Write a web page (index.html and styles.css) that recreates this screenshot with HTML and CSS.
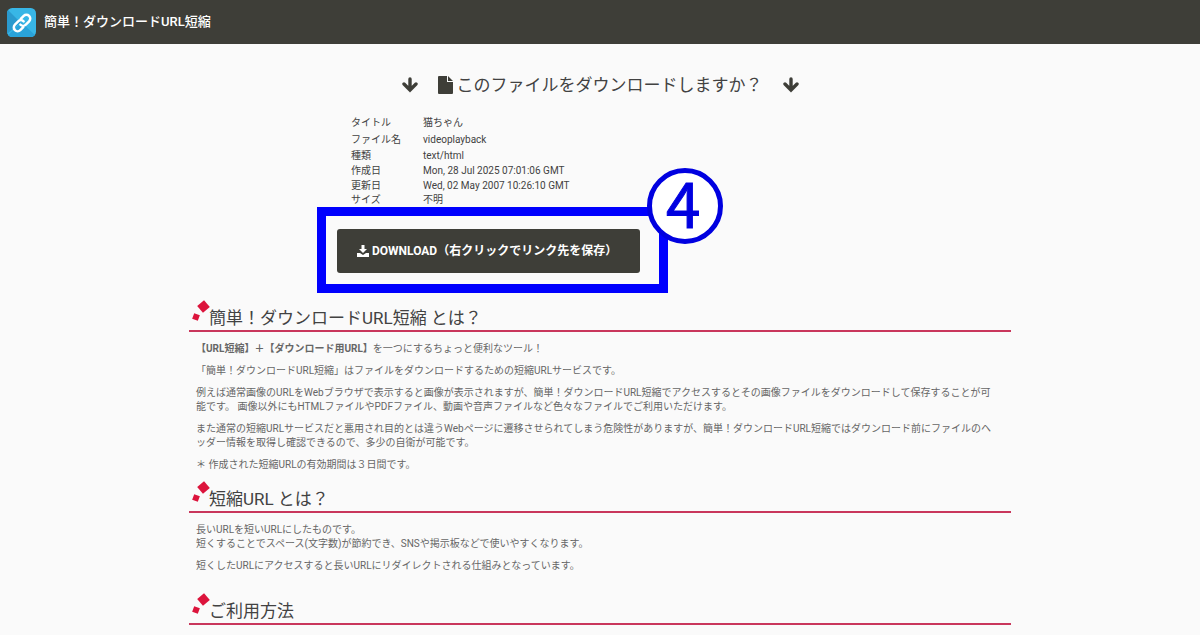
FILE: index.html
```html
<!DOCTYPE html>
<html lang="ja">
<head>
  <meta charset="UTF-8">
  <meta name="viewport" content="width=device-width, initial-scale=1">
  <title>簡単！ダウンロードURL短縮</title>
  <link rel="stylesheet" href="styles.css">
</head>
<body>

  <header class="site-header">
    <svg class="logo" viewBox="0 0 28 28" aria-hidden="true">
      <rect width="28" height="28" rx="5" fill="#38b6e6"/>
      <path d="M0 5a5 5 0 0 1 1-3l12 12L0 25z" fill="#2a9ace"/>
      <path d="M1 26l13-12 13 12a5 5 0 0 1-4 2H5a5 5 0 0 1-4-2z" fill="#2aa3da"/>
      <g transform="rotate(-45 14.500 14.500)" fill="none" stroke="#fff" stroke-width="2.400" stroke-linecap="round">
        <path d="M12.500 18.200H8.500a3.700 3.700 0 0 1 0-7.400h4.500a3.700 3.700 0 0 1 3.700 3.700"/>
        <path d="M16.500 10.800h4a3.700 3.700 0 0 1 0 7.400H16a3.700 3.700 0 0 1-3.700-3.700"/>
      </g>
    </svg>
    <a href="#">簡単！ダウンロードURL短縮</a>
  </header>

  <main class="container">
    <h1>
      <svg class="arrow" viewBox="0 0 16 16" aria-hidden="true"><path d="M8 2v11M2 7l6 6 6-6" fill="none" stroke="#3e3e38" stroke-width="3.400" stroke-linecap="round"/></svg>
      <span class="question">
        <svg class="file" viewBox="0 0 15 18" aria-hidden="true"><path d="M1 0h8v6h6v11a1 1 0 0 1-1 1H1a1 1 0 0 1-1-1V1a1 1 0 0 1 1-1zM10 0l5 5h-5z" fill="#3e3e38"/></svg>
        このファイルをダウンロードしますか？
      </span>
      <svg class="arrow" viewBox="0 0 16 16" aria-hidden="true"><path d="M8 2v11M2 7l6 6 6-6" fill="none" stroke="#3e3e38" stroke-width="3.400" stroke-linecap="round"/></svg>
    </h1>

    <div class="download">
      <table>
        <tr><th scope="row">タイトル</th><td>猫ちゃん</td></tr>
        <tr><th scope="row">ファイル名</th><td>videoplayback</td></tr>
        <tr><th scope="row">種類</th><td>text/html</td></tr>
        <tr><th scope="row">作成日</th><td>Mon, 28 Jul 2025 07:01:06 GMT</td></tr>
        <tr><th scope="row">更新日</th><td>Wed, 02 May 2007 10:26:10 GMT</td></tr>
        <tr><th scope="row">サイズ</th><td>不明</td></tr>
      </table>

      <div class="highlight">
        <a class="btn" href="#">
          <svg viewBox="0 0 12 12" aria-hidden="true"><path d="M4.500 0h3v4H10L6 8 2 4h2.500zM0 8h3l3 2 3-2h3v4H0z" fill="#fff"/></svg>
          DOWNLOAD（右クリックでリンク先を保存）
        </a>
        <span class="step">4</span>
      </div>
    </div>

    <section>
      <h2>簡単！ダウンロードURL短縮 とは？</h2>
      <p><strong>【URL短縮】＋【ダウンロード用URL】</strong>を一つにするちょっと便利なツール！</p>
      <p>「簡単！ダウンロードURL短縮」はファイルをダウンロードするための短縮URLサービスです。</p>
      <p>例えば通常画像のURLをWebブラウザで表示すると画像が表示されますが、簡単！ダウンロードURL短縮でアクセスするとその画像ファイルをダウンロードして保存することが可能です。 画像以外にもHTMLファイルやPDFファイル、動画や音声ファイルなど色々なファイルでご利用いただけます。</p>
      <p>また通常の短縮URLサービスだと悪用され目的とは違うWebページに遷移させられてしまう危険性がありますが、簡単！ダウンロードURL短縮ではダウンロード前にファイルのヘッダー情報を取得し確認できるので、多少の自衛が可能です。</p>
      <p>＊ 作成された短縮URLの有効期間は３日間です。</p>
    </section>

    <section>
      <h2>短縮URL とは？</h2>
      <p>長いURLを短いURLにしたものです。<br>短くすることでスペース(文字数)が節約でき、SNSや掲示板などで使いやすくなります。</p>
      <p>短くしたURLにアクセスすると長いURLにリダイレクトされる仕組みとなっています。</p>
    </section>

    <section class="usage">
      <h2>ご利用方法</h2>
    </section>
  </main>

</body>
</html>
```
FILE: styles.css
```css
* {
  box-sizing: border-box;
}

body {
  margin: 0;
  background-color: #fafafa;
  color: #424242;
  font-family: Roboto, "Noto Sans CJK JP", sans-serif;
  font-size: 10px;
  line-height: 14px;
}

.site-header {
  display: flex;
  align-items: center;
  gap: 8px;
  height: 44px;
  padding: 0 7px;
  background-color: #3e3e38;
}

.logo {
  width: 29px;
  height: 29px;
}

.site-header a {
  color: #fff;
  font-size: 13px;
  font-weight: 500;
  text-decoration: none;
}

.container {
  max-width: 822px;
  margin: 0 auto;
}

h1 {
  display: flex;
  justify-content: center;
  align-items: center;
  gap: 20px;
  margin: 28px 0 16px;
  font-size: 17px;
  font-weight: 400;
  line-height: 26px;
}

.question {
  display: flex;
  align-items: center;
  gap: 4px;
}

.arrow {
  width: 16px;
  height: 16px;
}

.file {
  width: 15px;
  height: 18px;
}

.download {
  max-width: 566px;
  margin: 0 auto;
}

table {
  margin-left: 34px;
  border-collapse: collapse;
}

th,
td {
  height: 15px;
  padding: 0;
  font-weight: 400;
  line-height: 14px;
  text-align: left;
}

th {
  width: 72px;
}

tr:nth-child(-n+2) > * {
  height: 17px;
}

tr:last-child > * {
  height: 14px;
}

/* step marker around the button */
.highlight {
  position: relative;
  width: fit-content;
  padding: 13px 19px 11px 11px;
  border: 9px solid #0000fe;
}

.btn {
  display: flex;
  align-items: center;
  gap: 3px;
  height: 44px;
  padding: 0 23px 0 20px;
  border-radius: 3px;
  background-color: #3e3e38;
  color: #fff;
  font-size: 12px;
  font-weight: 700;
  text-decoration: none;
}

.btn svg {
  width: 12px;
  height: 12px;
}

.step {
  position: absolute;
  top: -48px;
  right: -64px;
  width: 76px;
  height: 76px;
  padding-right: 4px;
  border: 5px solid #0000e0;
  border-radius: 50%;
  background-color: #fff;
  color: #0000e0;
  font-family: "Noto Sans CJK JP", sans-serif;
  font-size: 62px;
  font-weight: 400;
  line-height: 56px;
  text-align: center;
  -webkit-text-stroke: 1px #0000e0;
}

section {
  margin-top: 13px;
}

section + section {
  margin-top: 15px;
}

h2 {
  position: relative;
  margin: 0 0 10px;
  padding-left: 20px;
  border-bottom: 2px solid #c9375c;
  font-size: 17px;
  font-weight: 400;
  line-height: 24px;
}

h2::before,
h2::after {
  content: "";
  position: absolute;
  background-color: #dc143c;
}

h2::before {
  top: -4px;
  left: 10px;
  width: 9px;
  height: 9px;
  transform: rotate(50deg);
}

h2::after {
  top: 8px;
  left: 4px;
  width: 6px;
  height: 6px;
  transform: rotate(20deg);
}

p {
  margin: 0 12px 8px 7px;
  color: #666;
}

section + .usage {
  margin-top: 26px;
}
```
